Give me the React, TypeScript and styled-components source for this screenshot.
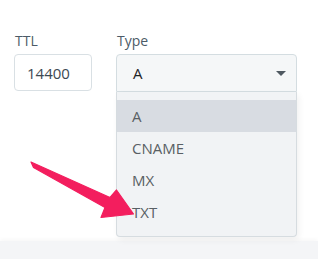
import React, { useState } from 'react';
import styled, { createGlobalStyle } from 'styled-components';

const GlobalStyle = createGlobalStyle`
  html, body {
    margin: 0;
    padding: 0;
    background: #ffffff;
  }
  body {
    font-family: 'Open Sans', 'Liberation Sans', sans-serif;
  }
`;

const recordTypes = ['A', 'CNAME', 'MX', 'TXT'];

const App: React.FC = () => {
  const [ttl, setTtl] = useState('14400');
  const [type, setType] = useState('A');

  return (
    <Page>
      <GlobalStyle />
      <FormBody>
        <FieldsRow>
          <Field>
            <Label>TTL</Label>
            <TtlInput value={ttl} onChange={(e) => setTtl(e.target.value)} />
          </Field>

          <Field $width={181}>
            <Label>Type</Label>
            <SelectWrap>
              <SelectBox>
                <span>{type}</span>
                <Caret />
              </SelectBox>
              <OptionList>
                {recordTypes.map((t) => (
                  <Option key={t} $active={t === type} onClick={() => setType(t)}>
                    {t}
                  </Option>
                ))}
              </OptionList>
            </SelectWrap>
          </Field>
        </FieldsRow>

        <Arrow viewBox="0 0 318 259" aria-hidden="true">
          <polygon
            points="31,162 110,197.5 116.5,190 133.5,214 101,217.5 105,207.5 33.5,167.5"
            fill="#f31e5e"
            stroke="#f31e5e"
            strokeWidth="1.2"
            strokeLinejoin="round"
          />
        </Arrow>
      </FormBody>
      <Footer />
    </Page>
  );
};

const Page = styled.div`
  display: flex;
  flex-direction: column;
  width: 318px;
  height: 259px;
  overflow: hidden;
`;

const FormBody = styled.div`
  position: relative;
  flex: 1;
  padding: 31px 14px 0;
`;

const FieldsRow = styled.div`
  display: flex;
  gap: 24px;
`;

const Field = styled.div<{ $width?: number }>`
  display: flex;
  flex-direction: column;
  width: ${({ $width }) => ($width ? `${$width}px` : 'auto')};
`;

const Label = styled.label`
  font-size: 14px;
  line-height: 19px;
  color: #4c5b68;
  margin-bottom: 4px;
  padding-left: 1px;
`;

const TtlInput = styled.input`
  box-sizing: border-box;
  width: 78px;
  height: 37px;
  padding: 0 12px;
  border: 1px solid #d9e0e4;
  border-radius: 4px;
  background: #ffffff;
  font-family: inherit;
  font-size: 15px;
  color: #3c4852;
  outline: none;
`;

const SelectWrap = styled.div`
  position: relative;
`;

const SelectBox = styled.div`
  box-sizing: border-box;
  display: flex;
  align-items: center;
  justify-content: space-between;
  height: 38px;
  padding: 0 10px 0 16px;
  border: 1px solid #d4dde1;
  border-radius: 4px 4px 0 0;
  background: #f5f7f8;
  font-size: 15px;
  color: #1f2326;
`;

const Caret = styled.span`
  width: 0;
  height: 0;
  border-left: 5px solid transparent;
  border-right: 5px solid transparent;
  border-top: 5px solid #4f5961;
  margin-top: 1px;
`;

const OptionList = styled.ul`
  position: absolute;
  top: 100%;
  left: 0;
  right: 0;
  margin: 0;
  padding: 8px 0;
  list-style: none;
  box-sizing: border-box;
  background: #f1f3f5;
  border: 1px solid #d6dce0;
  border-top: none;
  border-radius: 0 0 4px 4px;
  box-shadow: 2px 3px 6px rgba(0, 0, 0, 0.06);
`;

const Option = styled.li<{ $active?: boolean }>`
  height: 32px;
  display: flex;
  align-items: center;
  padding-left: 15px;
  font-size: 15px;
  color: #595f64;
  background: ${({ $active }) => ($active ? '#d8dce2' : 'transparent')};
  cursor: pointer;
`;

const Arrow = styled.svg`
  position: absolute;
  top: 0;
  left: 0;
  width: 318px;
  height: 259px;
  pointer-events: none;
`;

const Footer = styled.div`
  height: 18px;
  background: #f4f5f7;
  box-shadow: 0 -2px 4px rgba(0, 0, 0, 0.03);
`;

export default App;
